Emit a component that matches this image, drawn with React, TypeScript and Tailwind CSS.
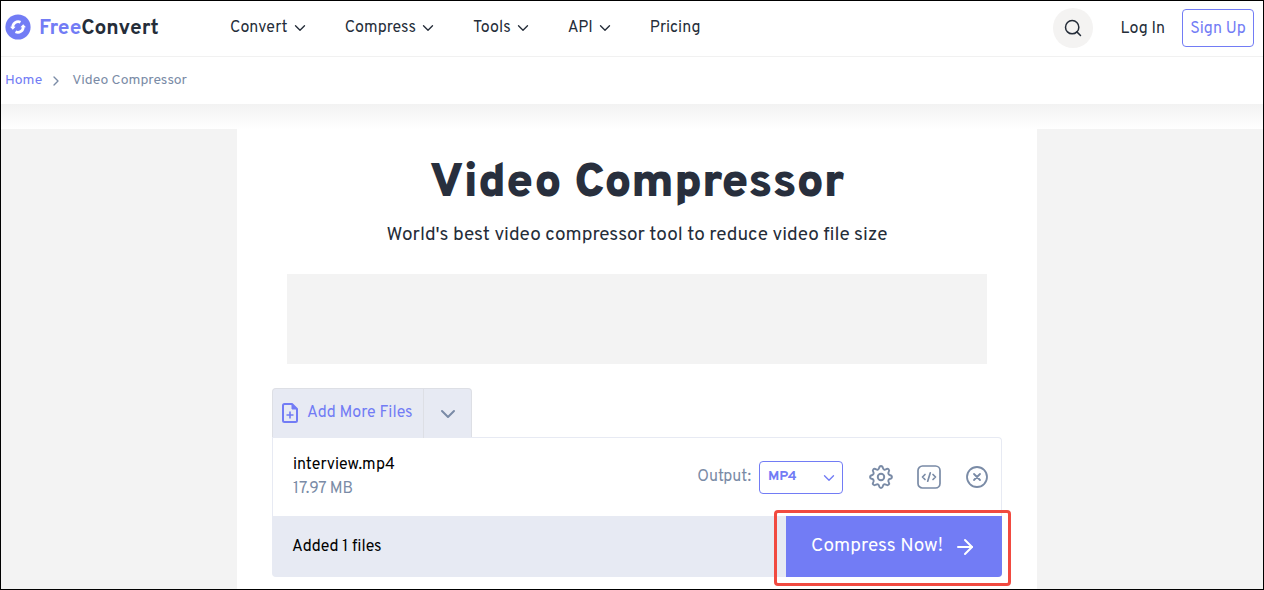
import type { ReactNode } from "react";
import { ArrowRight, ChevronDown, ChevronRight, Search } from "lucide-react";

type NavItem = {
  label: string;
  hasMenu: boolean;
};

const navItems: NavItem[] = [
  { label: "Convert", hasMenu: true },
  { label: "Compress", hasMenu: true },
  { label: "Tools", hasMenu: true },
  { label: "API", hasMenu: true },
  { label: "Pricing", hasMenu: false },
];

const LogoMark = () => (
  <svg viewBox="0 0 26 26" className="h-6.5 w-6.5" aria-hidden="true">
    <circle cx="13" cy="13" r="12.6" fill="#727cf5" />
    <g fill="none" stroke="#fff" strokeWidth="2.8">
      <path d="M7.800 13.500A5.400 5.400 0 0 1 15.500 8.200" />
      <path d="M18.200 12.500A5.400 5.400 0 0 1 10.500 17.800" />
    </g>
    <path d="M5 12.800h5.600l-2.800 3z" fill="#fff" />
    <path d="M21 13.200h-5.600l2.800-3z" fill="#fff" />
  </svg>
);

const FilePlusIcon = () => (
  <svg viewBox="0 0 18 22" className="h-5.5 w-4.5" fill="none" stroke="currentColor" strokeWidth="2" strokeLinejoin="round" aria-hidden="true">
    <path d="M11 2H3.500Q2 2 2 3.500V18.500Q2 20 3.500 20H14.500Q16 20 16 18.500V7Z" />
    <path d="M11 2V7H16Z" fill="currentColor" strokeWidth="1" />
    <path d="M9 9.500V16.500M5.500 13H12.500" strokeWidth="1.600" />
  </svg>
);

const GearIcon = () => (
  <svg viewBox="2 2 20 20" className="h-6 w-6" fill="none" stroke="currentColor" strokeWidth="1.6" strokeLinejoin="round" aria-hidden="true">
    <path d="M12 2.900c1.200 0 1.500 1 1.700 1.900.2.900 1.300 1.400 2.200.9.800-.5 1.700-.9 2.500-.1s.4 1.700-.1 2.500c-.5.900 0 2 .9 2.200.9.200 1.900.5 1.900 1.700s-1 1.500-1.900 1.700c-.9.200-1.400 1.300-.9 2.200.5.800.9 1.700.1 2.500s-1.700.4-2.500-.1c-.9-.5-2 0-2.200.9-.2.900-.5 1.900-1.700 1.900s-1.500-1-1.700-1.900c-.2-.9-1.300-1.400-2.200-.9-.8.500-1.700.9-2.500.1s-.4-1.700.1-2.500c.5-.9 0-2-.9-2.200-.9-.2-1.900-.5-1.900-1.700s1-1.500 1.900-1.700c.9-.2 1.400-1.300.9-2.200-.5-.8-.9-1.700-.1-2.500s1.700-.4 2.500.1c.9.500 2 0 2.200-.9.200-.9.500-1.900 1.700-1.900z" />
    <circle cx="12" cy="12" r="2.700" />
  </svg>
);

const CodeIcon = () => (
  <svg viewBox="0 0 24 24" className="h-6 w-6" fill="none" stroke="currentColor" strokeWidth="1.700" strokeLinecap="round" strokeLinejoin="round" aria-hidden="true">
    <rect x="1" y="1" width="22" height="22" rx="4.500" />
    <path d="M8 9.500L5.500 12L8 14.500M16 9.500L18.500 12L16 14.500M13.300 7.800L10.700 16.200" />
  </svg>
);

const RemoveIcon = () => (
  <svg viewBox="0 0 24 24" className="h-6 w-6" fill="none" stroke="currentColor" strokeWidth="1.800" strokeLinecap="round" aria-hidden="true">
    <circle cx="12" cy="12" r="10" />
    <path d="M9 9L15 15M15 9L9 15" />
  </svg>
);

const IconButton = ({ label, children }: { label: string; children: ReactNode }) => (
  <button type="button" aria-label={label} className="text-[#7a8ba6]">
    {children}
  </button>
);

const Header = () => (
  <header className="flex h-14 items-center border-b border-[#f1f1f1] pr-[9px] pb-0.5 pl-1">
    <a href="#" className="flex w-[225px] items-center gap-2 pb-0.5 text-[21px] font-bold text-[#252d39]">
      <LogoMark />
      <span className="pt-1"><span className="text-[#727cf5]">Free</span>Convert</span>
    </a>
    <nav className="flex flex-1 items-center gap-9">
      {navItems.map((item) => (
        <a key={item.label} href="#" className="flex items-center gap-[3px]">
          {item.label}
          {item.hasMenu && <ChevronDown className="h-4.5 w-4.5" strokeWidth={1.8} />}
        </a>
      ))}
    </nav>
    <div className="flex items-center">
      <button type="button" aria-label="Search" className="mr-7 flex h-10 w-10 items-center justify-center rounded-full bg-[#f4f3f2]">
        <Search className="h-5 w-5" strokeWidth={1.8} />
      </button>
      <a href="#" className="mr-[17px] pt-0.5">Log In</a>
      <a href="#" className="flex h-9.5 w-18 items-center justify-center rounded-sm border border-[#727cf5] pt-0.5 text-[#727cf5]">
        Sign Up
      </a>
    </div>
  </header>
);

const Breadcrumb = () => (
  <nav aria-label="Breadcrumb" className="flex h-[47px] items-center pl-1 text-sm text-[#7a8ba6]">
    <a href="#" className="text-[#727cf5]">Home</a>
    <ChevronRight className="mr-2 ml-1.5 h-4 w-4" />
    <span>Video Compressor</span>
  </nav>
);

const FileList = () => (
  <section className="mx-auto mt-6 w-full max-w-[730px]">
    <div className="flex h-12.5 w-50 rounded-t border border-b-0 border-[#dddfe5] bg-[#e7eaf3] pb-0.5">
      <button type="button" className="flex flex-1 items-center gap-2 pl-2 text-[#727cf5]">
        <FilePlusIcon />
        Add More Files
      </button>
      <button type="button" aria-label="More sources" className="-mb-0.5 flex w-12 items-center justify-center border-l border-[#dddfe5] text-[#7a8ba6]">
        <ChevronDown className="h-6 w-6" />
      </button>
    </div>
    <div className="-mt-px flex h-[79px] items-center rounded-tr border border-b-0 border-[#e7eaf3] pr-3 pl-5">
      <div className="flex-1 leading-6">
        <p className="text-black">interview.mp4</p>
        <p className="text-[#7a8ba6]">17.97 MB</p>
      </div>
      <label htmlFor="output" className="mr-2 text-[#7a8ba6]">Output:</label>
      <div className="relative mr-[26px] text-[#727cf5]">
        <select id="output" defaultValue="mp4" className="block h-[33px] w-21 appearance-none rounded-sm border border-[#727cf5] bg-white pl-2 text-sm font-bold">
          <option value="mp4">MP4</option>
        </select>
        <ChevronDown className="pointer-events-none absolute top-2 right-[5px] h-4.5 w-4.5" strokeWidth={1.8} />
      </div>
      <div className="flex gap-6">
        <IconButton label="Settings"><GearIcon /></IconButton>
        <IconButton label="Show code"><CodeIcon /></IconButton>
        <IconButton label="Remove file"><RemoveIcon /></IconButton>
      </div>
    </div>
    <div className="flex h-[61px] items-center rounded-b bg-[#e7eaf3] pl-5 text-black">
      <span className="flex-1">Added 1 files</span>
      <div className="relative">
        <button type="button" className="flex h-[61px] w-54 items-center justify-center gap-2.5 rounded-br bg-[#727cf5] text-[19px] text-white">
          Compress Now!
          <ArrowRight className="h-6 w-6" />
        </button>
        <div className="pointer-events-none absolute -top-1.5 -right-[9px] -bottom-[9px] -left-3 rounded-sm border-3 border-[#f14a40]" />
      </div>
    </div>
  </section>
);

export default function App() {
  return (
    <div className="flex min-h-screen flex-col border border-black bg-white font-[Overpass,Roboto,sans-serif] text-base text-[#252d39]">
      <Header />
      <Breadcrumb />
      <div className="h-[25px] bg-linear-to-b from-[#f2f2f2] to-white" />
      <div className="grid flex-1 grid-cols-[236fr_minmax(0,800px)_226fr]">
        <aside className="bg-[#f3f3f3]" />
        <main>
          <h1 className="pt-[23px] text-center text-5xl leading-16 font-black text-[#282f3d]">Video Compressor</h1>
          <p className="mt-[3px] text-center text-[19px] leading-8">World's best video compressor tool to reduce video file size</p>
          <div className="mx-auto mt-[23px] h-22.5 w-full max-w-[700px] bg-[#f3f3f3]" />
          <FileList />
        </main>
        <aside className="bg-[#f3f3f3]" />
      </div>
    </div>
  );
}
